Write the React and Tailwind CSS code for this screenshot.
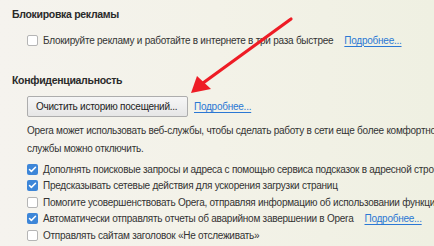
import { Check } from "lucide-react";

function Box({ checked }) {
  return checked ? (
    <span className="flex h-[11px] w-[11px] shrink-0 items-center justify-center rounded-[2px] bg-[#3d86d8]">
      <Check className="h-[9px] w-[9px] text-white" strokeWidth={4} />
    </span>
  ) : (
    <span className="h-[11px] w-[11px] shrink-0 rounded-[2px] border border-[#b5b5b5] bg-white" />
  );
}

function Link({ children }) {
  return <span className="ml-[6px] text-[#2b78d4] underline underline-offset-2">{children}</span>;
}

const options = [
  { on: true, text: "Дополнять поисковые запросы и адреса с помощью сервиса подсказок в адресной строке" },
  { on: true, text: "Предсказывать сетевые действия для ускорения загрузки страниц" },
  { on: false, text: "Помогите усовершенствовать Opera, отправляя информацию об использовании функций браузера" },
  { on: true, text: "Автоматически отправлять отчеты об аварийном завершении в Opera", more: true },
  { on: false, text: "Отправлять сайтам заголовок «Не отслеживать»" },
];

export default function App() {
  return (
    <div
      className="relative h-[246px] w-[434px] overflow-hidden bg-gradient-to-r from-[#f5f3ee] via-[#f3f2e8] to-[#eff0e2] pl-[12px] text-[10px] tracking-[-0.25px] text-[#333] whitespace-nowrap"
      style={{ fontFamily: '"Liberation Sans", Arial, sans-serif' }}
    >
      {/* Блокировка рекламы */}
      <h2 className="mt-[5px] text-[10.5px] font-bold leading-[18px] tracking-[-0.3px] text-[#2a2a2a]">Блокировка рекламы</h2>
      <div className="mt-[9px] flex h-[16px] items-center gap-[5px] pl-[15px]">
        <Box />
        <span>Блокируйте рекламу и работайте в интернете в три раза быстрее</span>
        <Link>Подробнее...</Link>
      </div>

      {/* Конфиденциальность */}
      <h2 className="mt-[23px] text-[10.5px] font-bold leading-[18px] tracking-[-0.3px] text-[#2a2a2a]">Конфиденциальность</h2>
      <div className="mt-[7px] flex items-center pl-[15px]">
        <button className="h-[21px] w-[161px] rounded-[2px] border border-[#adadad] bg-gradient-to-b from-[#f6f6f6] to-[#e6e6e6] px-[8px] text-left leading-[19px] text-[#222]">
          Очистить историю посещений...
        </button>
        <Link>Подробнее...</Link>
      </div>
      <p className="mt-[5px] pl-[15px] leading-[18px]">
        Opera может использовать веб-службы, чтобы сделать работу в сети еще более комфортной. Эти
        <br />
        службы можно отключить.
      </p>
      <ul className="mt-[3px] pl-[15px]">
        {options.map((o) => (
          <li key={o.text} className="flex h-[16.5px] items-center gap-[5px]">
            <Box checked={o.on} />
            <span>{o.text}</span>
            {o.more && <Link>Подробнее...</Link>}
          </li>
        ))}
      </ul>

      {/* arrow */}
      <svg className="absolute left-0 top-0" width="434" height="246" viewBox="0 0 434 246">
        <line x1="291" y1="19" x2="203" y2="83" stroke="#ee1c25" strokeWidth="3.2" strokeLinecap="round" />
        <polygon points="191,93 197,76 211,89" fill="#ee1c25" />
      </svg>
    </div>
  );
}
